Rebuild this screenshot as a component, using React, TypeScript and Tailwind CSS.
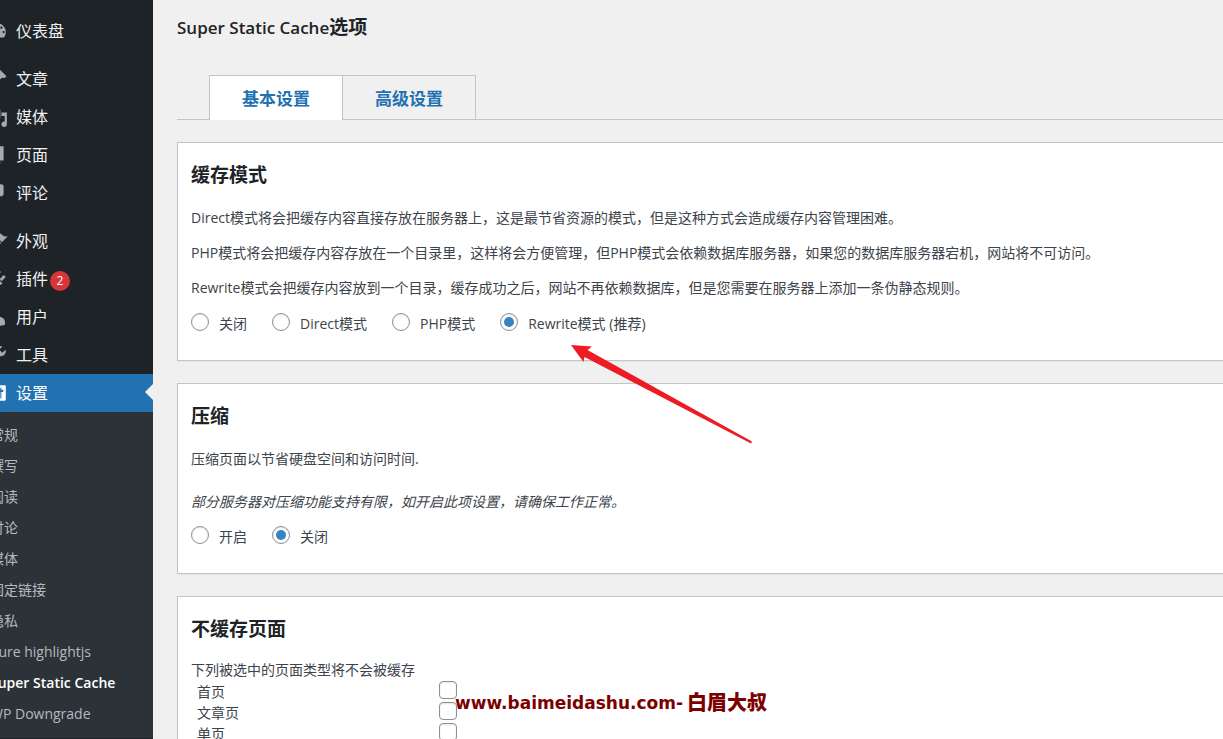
import { useState } from "react";
import type { ReactNode } from "react";

type MenuItem = { label: string; icon: string; badge?: number; active?: boolean };

const menuGroups: MenuItem[][] = [
  [
    {
      label: "仪表盘",
      icon: "M3.76 16h12.48c1.1-1.37 1.76-3.11 1.76-5 0-4.42-3.58-8-8-8s-8 3.58-8 8c0 1.89.66 3.63 1.76 5zM10 4c.55 0 1 .45 1 1s-.45 1-1 1-1-.45-1-1 .45-1 1-1zM6 6c.55 0 1 .45 1 1s-.45 1-1 1-1-.45-1-1 .45-1 1-1zm8 0c.55 0 1 .45 1 1s-.45 1-1 1-1-.45-1-1 .45-1 1-1zm-5.37 5.55L12 7v6c0 1.1-.9 2-2 2s-2-.9-2-2c0-.57.24-1.08.63-1.45zM4 10c.55 0 1 .45 1 1s-.45 1-1 1-1-.45-1-1 .45-1 1-1zm12 0c.55 0 1 .45 1 1s-.45 1-1 1-1-.45-1-1 .45-1 1-1zm-5 3c0-.55-.45-1-1-1s-1 .45-1 1 .45 1 1 1 1-.45 1-1z",
    },
  ],
  [
    {
      label: "文章",
      icon: "M10.44 3.02l1.82-1.82 6.36 6.35-1.83 1.82c-1.05-.68-2.48-.57-3.41.36l-.75.75c-.92.93-1.04 2.35-.35 3.41l-1.83 1.82-2.41-2.41-2.8 2.79c-.42.42-3.38 2.71-3.8 2.29s1.86-3.39 2.28-3.81l2.79-2.79L4.1 9.36l1.83-1.82c1.05.69 2.48.57 3.4-.36l.75-.75c.93-.92 1.05-2.35.36-3.41z",
    },
    {
      label: "媒体",
      icon: "M13 11V4c0-.55-.45-1-1-1h-1.67L9 1H5L3.67 3H2c-.55 0-1 .45-1 1v7c0 .55.45 1 1 1h10c.55 0 1-.45 1-1zM7 4.5c1.38 0 2.5 1.12 2.5 2.5S8.38 9.5 7 9.5 4.5 8.38 4.5 7 5.62 4.5 7 4.5zM14 6h5v10.5c0 1.38-1.12 2.5-2.5 2.5S14 17.88 14 16.5s1.12-2.5 2.5-2.5c.17 0 .34.02.5.05V9h-3V6zm-4 8.05V13h2v3.5c0 1.38-1.12 2.5-2.5 2.5S7 17.88 7 16.5 8.12 14 9.5 14c.17 0 .34.02.5.05z",
    },
    { label: "页面", icon: "M6 15V2h10v13H6zm-1 1h8v2H3V5h2v11z" },
    {
      label: "评论",
      icon: "M5 2h9c1.1 0 2 .9 2 2v7c0 1.1-.9 2-2 2h-2l-5 5v-5H5c-1.1 0-2-.9-2-2V4c0-1.1.9-2 2-2z",
    },
  ],
  [
    {
      label: "外观",
      icon: "M14.48 11.06L7.41 3.99l1.5-1.5c.5-.56 2.3-.47 3.51.32 1.21.8 1.43 1.28 2.91 2.1 1.18.64 2.45 1.26 4.45.85zm-.71.71L6.7 4.7 4.93 6.47c-.39.39-.39 1.02 0 1.41l1.06 1.06c.39.39.39 1.03 0 1.42-.6.6-1.43 1.11-2.21 1.69-.35.26-.7.53-1.01.84C1.43 14.23.4 16.08 1.4 17.07c.99 1 2.84-.03 4.18-1.36.31-.31.58-.66.85-1.02.57-.78 1.08-1.61 1.69-2.21.39-.39 1.02-.39 1.41 0l1.06 1.06c.39.39 1.02.39 1.41 0z",
    },
    {
      label: "插件",
      badge: 2,
      icon: "M13.11 4.36L9.87 7.6 8 5.73l3.24-3.24c.35-.34 1.05-.2 1.56.32.52.51.66 1.21.31 1.55zm-8 1.77l.91-1.12 9.01 9.01-1.19.84c-.71.71-2.63 1.16-3.82 1.16H6.14L4.9 17.26c-.59.59-1.54.59-2.12 0-.59-.58-.59-1.53 0-2.12l1.24-1.24v-3.88c0-1.13.4-3.19 1.09-3.89zm7.26 3.97l3.24-3.24c.34-.35 1.04-.21 1.55.31.52.51.66 1.21.31 1.55l-3.24 3.25z",
    },
    {
      label: "用户",
      icon: "M10 9.25c-2.27 0-2.73-3.44-2.73-3.44C7 4.02 7.82 2 9.97 2c2.16 0 2.98 2.02 2.71 3.81 0 0-.41 3.44-2.68 3.44zm0 2.57L12.72 10c2.39 0 4.52 2.33 4.52 4.53v2.49s-3.65 1.13-7.24 1.13c-3.65 0-7.24-1.13-7.24-1.13v-2.49c0-2.25 1.94-4.48 4.47-4.48z",
    },
    {
      label: "工具",
      icon: "M16.68 9.77c-1.34 1.34-3.3 1.67-4.95.99l-5.41 6.52c-.99.99-2.59.99-3.58 0s-.99-2.59 0-3.57l6.52-5.42c-.68-1.65-.35-3.61.99-4.95 1.28-1.28 3.12-1.62 4.72-1.06l-2.89 2.89 2.82 2.82 2.86-2.87c.53 1.58.18 3.39-1.08 4.65zM3.81 16.21c.4.39 1.04.39 1.43 0 .4-.4.4-1.04 0-1.43-.39-.4-1.03-.4-1.43 0-.39.39-.39 1.03 0 1.43z",
    },
    {
      label: "设置",
      active: true,
      icon: "M18 16V4c0-.55-.45-1-1-1H3c-.55 0-1 .45-1 1v12c0 .55.45 1 1 1h14c.55 0 1-.45 1-1zM8 11h1c.55 0 1 .45 1 1s-.45 1-1 1H8v1.5c0 .28-.22.5-.5.5s-.5-.22-.5-.5V13H6c-.55 0-1-.45-1-1s.45-1 1-1h1V5.5c0-.28.22-.5.5-.5s.5.22.5.5V11zm5-2h-1c-.55 0-1-.45-1-1s.45-1 1-1h1V5.5c0-.28.22-.5.5-.5s.5.22.5.5V7h1c.55 0 1 .45 1 1s-.45 1-1 1h-1v5.5c0 .28-.22.5-.5.5s-.5-.22-.5-.5V9z",
    },
  ],
];

const submenu = [
  "常规",
  "撰写",
  "阅读",
  "讨论",
  "媒体",
  "固定链接",
  "隐私",
  "Pure highlightjs",
  "Super Static Cache",
  "WP Downgrade",
];

function Sidebar() {
  return (
    <nav className="-ml-[23px] w-44 shrink-0 bg-[#1d2327] pt-3">
      <div className="flex flex-col gap-[10px]">
        {menuGroups.map((group, i) => (
          <ul key={i}>
            {group.map((item) => (
              <li key={item.label}>
                <a
                  href="#"
                  className={`relative flex h-[38px] items-center pl-[9px] text-base ${
                    item.active ? "bg-[#2271b1] text-white" : "text-[#f0f0f1]"
                  }`}
                >
                  <svg
                    viewBox="0 0 20 20"
                    className={`mr-2 size-[22px] shrink-0 ${item.active ? "fill-white" : "fill-[#a7aaad]"}`}
                    aria-hidden="true"
                  >
                    <path d={item.icon} />
                  </svg>
                  {item.label}
                  {item.badge && (
                    <span className="mt-1 ml-[2px] flex size-5 items-center justify-center rounded-full bg-[#d63638] text-xs text-white">
                      {item.badge}
                    </span>
                  )}
                  {item.active && (
                    <svg viewBox="0 0 8 16" className="absolute top-[10px] right-0 h-4 w-2 fill-[#f0f0f1]" aria-hidden="true">
                      <path d="M8 0v16L0 8z" />
                    </svg>
                  )}
                </a>
              </li>
            ))}
          </ul>
        ))}
      </div>
      <ul className="bg-[#2c3338] pt-[7px] pb-[9px]">
        {submenu.map((label) => (
          <li key={label}>
            <a
              href="#"
              className={`flex h-[31px] items-center pl-[13px] text-sm whitespace-nowrap ${
                label === "Super Static Cache" ? "font-semibold text-white" : "text-[#b4b9be]"
              }`}
            >
              {label}
            </a>
          </li>
        ))}
      </ul>
    </nav>
  );
}

function Card({ title, children }: { title: string; children: ReactNode }) {
  return (
    <section className="relative border border-[#c3c4c7] bg-white px-[13px] pt-4 pb-[25px] shadow-[0_1px_1px_rgba(0,0,0,0.04)]">
      <h2 className="text-[19px] leading-8 font-semibold text-[#1d2327]">{title}</h2>
      {children}
    </section>
  );
}

function RadioRow({ name, options, initial }: { name: string; options: string[]; initial: string }) {
  const [value, setValue] = useState(initial);
  return (
    <div className="flex gap-[25px]">
      {options.map((option) => (
        <label key={option} className="flex h-[22px] items-center gap-[10px]">
          <input
            type="radio"
            name={name}
            checked={value === option}
            onChange={() => setValue(option)}
            className="mb-1 grid size-[18px] appearance-none place-items-center rounded-full border border-[#8c8f94] bg-white shadow-[inset_0_1px_2px_rgba(0,0,0,0.1)] before:size-[10px] before:rounded-full checked:before:bg-[#3582c4] checked:before:content-['']"
          />
          {option}
        </label>
      ))}
    </div>
  );
}

const pageTypes = ["首页", "文章页", "单页", "分类页"];

export default function App() {
  return (
    <div className="flex h-screen overflow-hidden bg-[#f0f0f1] font-['Open_Sans','Noto_Sans_CJK_SC',sans-serif] text-sm leading-[22px] text-[#3c434a]">
      <Sidebar />
      <main className="-mr-px min-w-0 flex-1 pt-3 pl-6">
        <h1 className="mb-8 h-[31px] text-[17px] leading-[31px] font-semibold text-[#1d2327]">
          Super Static Cache<span className="text-[19px]">选项</span>
        </h1>
        <div className="mb-[22px] flex border-b border-[#c3c4c7] pl-8 text-[17px] font-semibold text-[#2271b1]">
          <a href="#basic" className="-mb-px flex h-[45px] items-center border border-b-0 border-[#c3c4c7] bg-white px-8 pt-[2px]">
            基本设置
          </a>
          <a href="#advanced" className="flex h-11 items-center border border-b-0 border-l-0 border-[#c3c4c7] px-8 pt-[2px]">
            高级设置
          </a>
        </div>
        <div className="flex flex-col gap-[22px]">
          <Card title="缓存模式">
            <div className="mt-4 mb-[14px] flex flex-col gap-[13px]">
              <p>Direct模式将会把缓存内容直接存放在服务器上，这是最节省资源的模式，但是这种方式会造成缓存内容管理困难。</p>
              <p>PHP模式将会把缓存内容存放在一个目录里，这样将会方便管理，但PHP模式会依赖数据库服务器，如果您的数据库服务器宕机，网站将不可访问。</p>
              <p>Rewrite模式会把缓存内容放到一个目录，缓存成功之后，网站不再依赖数据库，但是您需要在服务器上添加一条伪静态规则。</p>
            </div>
            <RadioRow
              name="cache-mode"
              options={["关闭", "Direct模式", "PHP模式", "Rewrite模式 (推荐)"]}
              initial="Rewrite模式 (推荐)"
            />
            <svg
              viewBox="0 0 182 99"
              className="pointer-events-none absolute top-[202px] left-[393px] z-10 h-[99px] w-[182px] fill-[#ed1c24]"
              aria-hidden="true"
            >
              <path d="M0 0l21 1.500-4.500 3.500L181 96.500l-1 2L13.500 12l-1 5z" />
            </svg>
          </Card>
          <Card title="压缩">
            <p className="mt-4 mb-[21px]">压缩页面以节省硬盘空间和访问时间.</p>
            <p className="mb-[13px] italic">部分服务器对压缩功能支持有限，如开启此项设置，请确保工作正常。</p>
            <RadioRow name="compress" options={["开启", "关闭"]} initial="关闭" />
          </Card>
          <Card title="不缓存页面">
            <p className="mt-[14px]">下列被选中的页面类型将不会被缓存</p>
            <table>
              <tbody>
                {pageTypes.map((type, i) => (
                  <tr key={type} className="h-[21px] leading-[21px]">
                    <td className="w-[248px] pl-[6px]">
                      <label htmlFor={`type-${i}`}>{type}</label>
                    </td>
                    <td className="align-top">
                      <input
                        id={`type-${i}`}
                        type="checkbox"
                        className="block size-[18px] appearance-none rounded border border-[#8c8f94] bg-white shadow-[inset_0_1px_2px_rgba(0,0,0,0.1)]"
                      />
                    </td>
                  </tr>
                ))}
              </tbody>
            </table>
            <div className="pointer-events-none absolute top-[92px] left-[277px] flex items-center gap-1 whitespace-nowrap text-[#7b0000]">
              <span className="font-['DejaVu_Sans'] text-[17px] font-bold">www.baimeidashu.com-</span>
              <span className="text-xl font-black">白眉大叔</span>
            </div>
          </Card>
        </div>
      </main>
    </div>
  );
}
